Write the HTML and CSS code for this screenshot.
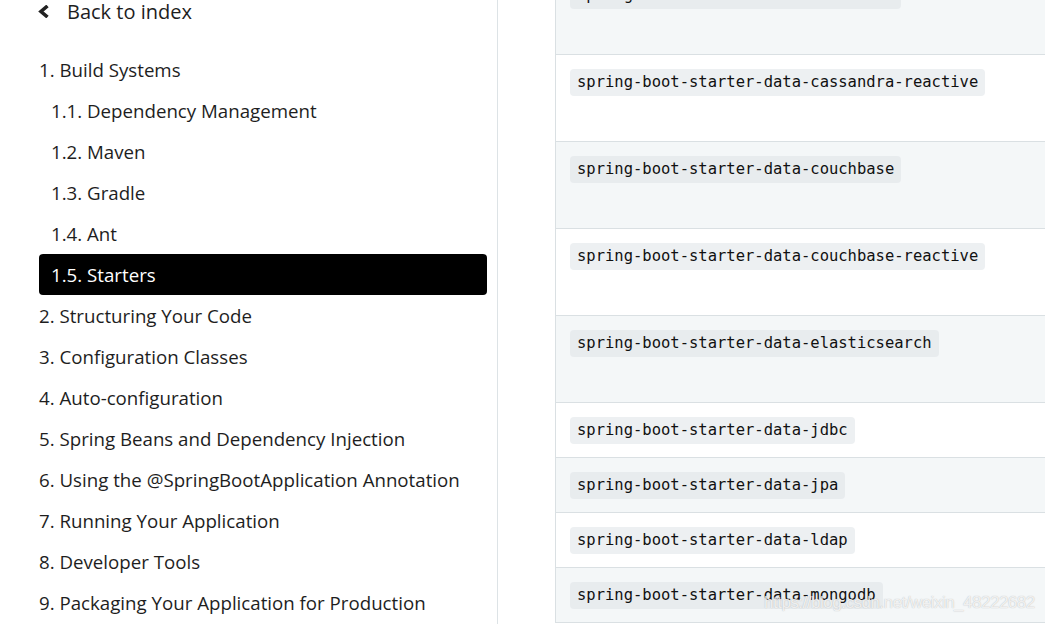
FILE: index.html
```html
<!DOCTYPE html>
<html>
<head>
  <title>Spring Boot - Starters</title>
  <link rel="stylesheet" href="styles.css">
</head>
<body>
  <div class="page">
    <aside class="sidebar">
      <a class="back" href="#">
        <svg class="chevron" width="13" height="13" viewBox="0 0 13 13">
          <path d="M10.5 1 L4 6.5 L10.5 12" fill="none" stroke="#222" stroke-width="3.6"/>
        </svg>
        Back to index
      </a>
      <ul class="toc">
        <li>1. Build Systems</li>
        <li class="sub">1.1. Dependency Management</li>
        <li class="sub">1.2. Maven</li>
        <li class="sub">1.3. Gradle</li>
        <li class="sub">1.4. Ant</li>
        <li class="sub active">1.5. Starters</li>
        <li>2. Structuring Your Code</li>
        <li>3. Configuration Classes</li>
        <li>4. Auto-configuration</li>
        <li>5. Spring Beans and Dependency Injection</li>
        <li>6. Using the @SpringBootApplication Annotation</li>
        <li>7. Running Your Application</li>
        <li>8. Developer Tools</li>
        <li>9. Packaging Your Application for Production</li>
      </ul>
    </aside>

    <main class="content">
      <div class="starters">
        <div class="row odd tall first"><code>spring-boot-starter-data-cassandra</code></div>
        <div class="row tall"><code>spring-boot-starter-data-cassandra-reactive</code></div>
        <div class="row odd tall"><code>spring-boot-starter-data-couchbase</code></div>
        <div class="row tall"><code>spring-boot-starter-data-couchbase-reactive</code></div>
        <div class="row odd tall"><code>spring-boot-starter-data-elasticsearch</code></div>
        <div class="row"><code>spring-boot-starter-data-jdbc</code></div>
        <div class="row odd"><code>spring-boot-starter-data-jpa</code></div>
        <div class="row"><code>spring-boot-starter-data-ldap</code></div>
        <div class="row odd"><code>spring-boot-starter-data-mongodb</code></div>
      </div>
      <div class="watermark">https://blog.csdn.net/weixin_48222682</div>
    </main>
  </div>
</body>
</html>
```

FILE: styles.css
```css
/* Estilos da página */

body {
  margin: 0;
  font-family: "Open Sans", Arial, sans-serif;
  color: #1e1e1e;
  background-color: #fff;
  overflow: hidden;
}

.page {
  display: flex;
  height: 624px;
}

.sidebar {
  width: 448px;
  padding: 0 10px 0 39px;
  border-right: 1px solid #dde3e6;
  flex-shrink: 0;
}

.back {
  display: flex;
  align-items: center;
  height: 40px;
  margin-top: -9px;
  margin-left: -2px;
  font-size: 20px;
  color: #1e1e1e;
  text-decoration: none;
}

.chevron {
  margin-right: 17px;
}

.toc {
  list-style: none;
  margin: 18px 0 0 0;
  padding: 0;
}

.toc li {
  height: 41px;
  line-height: 41px;
  font-size: 18.7px;
}

.toc li.sub {
  padding-left: 12px;
}

.toc li.active {
  background-color: #000;
  color: #fff;
  border-radius: 4px;
}

.content {
  position: relative;
  flex: 1;
  padding-left: 57px;
}

.starters {
  border-left: 1px solid #dae0e3;
  margin-top: -32px;
}

.row {
  padding: 14px 14px 13px;
  border-bottom: 1px solid #dae0e3;
  background-color: #fff;
}

.row.odd {
  background-color: #f4f7f8;
}

.row.tall {
  padding-bottom: 45px;
}

.row code {
  display: inline-block;
  padding: 0 7px;
  line-height: 27px;
  font-family: "DejaVu Sans Mono", "Liberation Mono", monospace;
  font-size: 15.5px;
  color: #111;
  background-color: #edf0f2;
  border-radius: 4px;
}

.row.odd code {
  background-color: #e8ecee;
}

.watermark {
  position: absolute;
  left: 266px;
  top: 593px;
  font-family: "Liberation Sans", Arial, sans-serif;
  font-size: 17px;
  letter-spacing: -0.5px;
  color: rgba(255, 255, 255, 0.8);
  text-shadow: 0 0 1px rgba(120, 120, 120, 0.55);
  white-space: nowrap;
}
```
